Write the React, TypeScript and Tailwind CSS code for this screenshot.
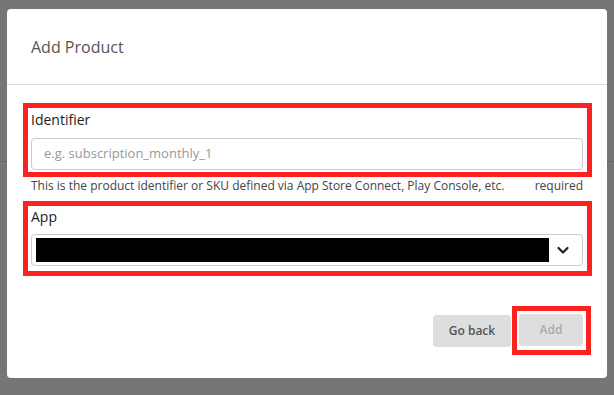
import React from "react";

function Chevron() {
  return (
    <svg width="14" height="14" viewBox="0 0 14 14" fill="none">
      <path d="M2.5 5 L7 9.5 L11.5 5" stroke="#222" strokeWidth="2.2" strokeLinecap="round" strokeLinejoin="round" />
    </svg>
  );
}

export default function App() {
  return (
    <div
      className="relative w-[614px] h-[395px] overflow-hidden bg-[#767676] pt-[9px] pl-[7px]"
      style={{ fontFamily: '"Open Sans", "Liberation Sans", sans-serif' }}
    >
      <div className="absolute left-0 right-0 top-[161px] h-px bg-[#666]" />
      <div className="relative w-[600px] h-[369px] bg-white rounded-[4px] flex flex-col">
        <div className="h-[76px] shrink-0 border-b border-[#dcdcdc] flex items-center pl-[24px] text-[16px] text-[#555]">
          Add Product
        </div>
        <div className="mt-[18px] ml-[16px] mr-[15px] border-[5px] border-[#ff2020] pl-[3px] pr-[4px] pb-[2px]">
          <div className="mt-[2px] h-[20px] leading-[20px] text-[14px] text-[#222]">Identifier</div>
          <div className="mt-[8px] h-[32px] border border-[#ccc] rounded-[4px] flex items-center pl-[12px] text-[13px] text-[#999]">
            e.g. subscription_monthly_1
          </div>
        </div>
        <div className="mt-[1px] px-[24px] flex justify-between text-[12px] leading-[16px] text-[#444]">
          <span>This is the product identifier or SKU defined via App Store Connect, Play Console, etc.</span>
          <span>required</span>
        </div>
        <div className="mt-[7px] ml-[16px] mr-[15px] border-[5px] border-[#ff2020] pl-[3px] pr-[4px] pb-[5px]">
          <div className="mt-[1px] h-[20px] leading-[20px] text-[14px] text-[#222]">App</div>
          <div className="mt-[7px] h-[32px] border border-[#ccc] rounded-[4px] flex items-center pl-[4px] pr-[12px]">
            <div className="w-[513px] h-[24px] bg-black" />
            <div className="ml-auto flex items-center">
              <Chevron />
            </div>
          </div>
        </div>
        <div className="mt-[30px] mr-[16px] flex justify-end items-center">
          <button className="w-[78px] h-[32px] rounded-[4px] bg-[#dedede] text-[12px] font-semibold text-[#555] mr-[1px]">
            Go back
          </button>
          <div className="border-[5px] border-[#ff2020] pl-[2px] pr-[3px] pt-[3px] pb-[4px]">
            <button className="w-[64px] h-[32px] rounded-[4px] bg-[#dedede] text-[12px] font-semibold text-[#aaa]">
              Add
            </button>
          </div>
        </div>
      </div>
    </div>
  );
}
